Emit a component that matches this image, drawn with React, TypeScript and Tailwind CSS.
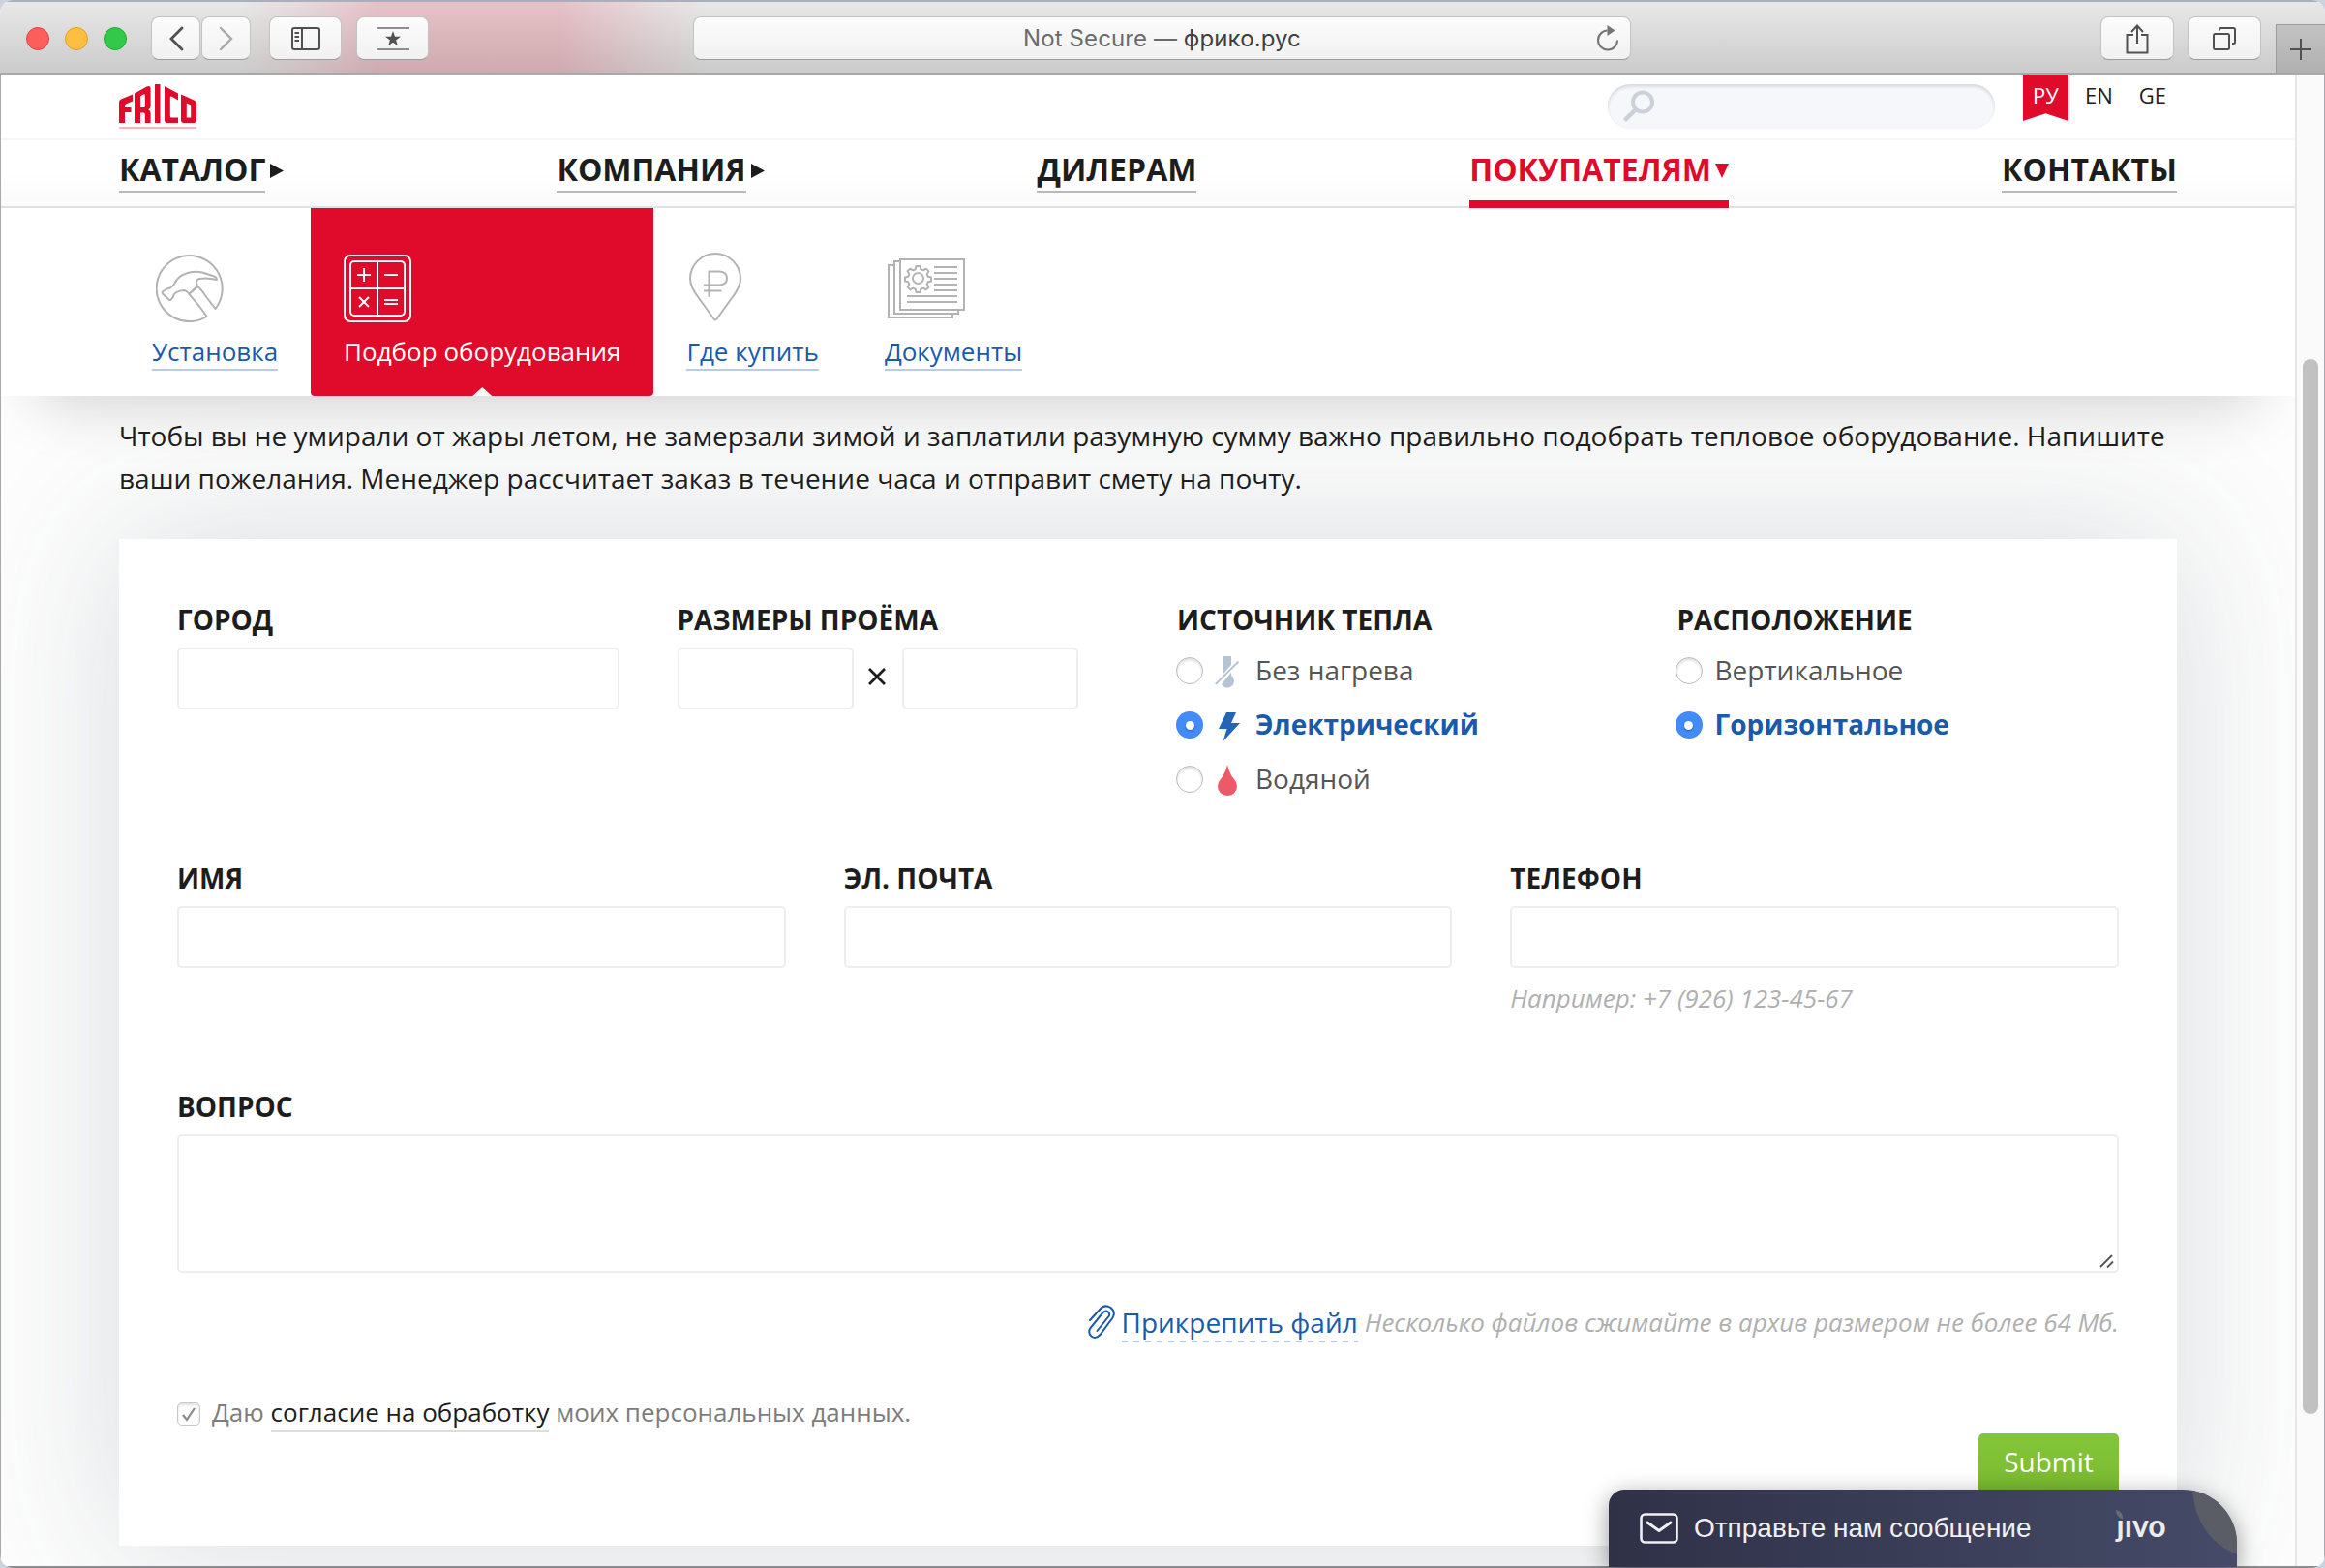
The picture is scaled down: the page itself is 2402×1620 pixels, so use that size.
import type { ReactNode } from "react";

const toolButton =
  "flex h-[45px] items-center justify-center rounded-[8px] border border-[#c3c3c3] border-b-[#9c9c9c] bg-linear-to-b from-[#fcfcfc] to-[#f1f1f1]";

function Toolbar() {
  return (
    <header className="relative flex h-[77px] shrink-0 items-start border-t-2 border-b-2 border-t-[#a9afbd] border-b-[#a9a9a9] bg-linear-to-b from-[#e8e8e8] to-[#cbcbcb] pt-[15px]">
      <div className="absolute inset-0 bg-[linear-gradient(90deg,transparent_250px,rgba(224,10,43,0.06)_310px,rgba(224,10,43,0.17)_390px,rgba(224,10,43,0.17)_580px,rgba(224,10,43,0.06)_670px,transparent_730px)]" />
      <div className="relative flex w-full items-start pl-[27px]">
        <div className="flex h-[45px] items-center gap-4">
          <span className="size-6 rounded-full border border-[#e2463f] bg-[#fc5f5b]" />
          <span className="size-6 rounded-full border border-[#dfa023] bg-[#fdbe41]" />
          <span className="size-6 rounded-full border border-[#1dad2b] bg-[#34c84a]" />
        </div>
        <div className="ml-[25px] flex gap-px">
          <button className={`${toolButton} w-[51px]`}>
            <svg width="16" height="26" viewBox="0 0 16 26" fill="none" stroke="#505050" strokeWidth="2.8" strokeLinecap="round">
              <path d="M14 2 3 13l11 11" />
            </svg>
          </button>
          <button className={`${toolButton} w-[51px]`}>
            <svg width="16" height="26" viewBox="0 0 16 26" fill="none" stroke="#a8a8a8" strokeWidth="2.4" strokeLinecap="round">
              <path d="m2 2 11 11L2 24" />
            </svg>
          </button>
        </div>
        <button className={`${toolButton} ml-[19px] w-[75px]`}>
          <svg width="32" height="26" viewBox="0 0 32 26" fill="none" stroke="#505050" strokeWidth="2">
            <rect x="2" y="2" width="28" height="22" rx="2" />
            <path d="M12 2v22" />
            <path d="M4.500 7h4.500M4.500 11h4.500M4.500 15h4.500" strokeWidth="1.800" />
          </svg>
        </button>
        <button className={`${toolButton} ml-[15px] w-[75px]`}>
          <svg width="34" height="26" viewBox="0 0 34 26">
            <path d="M0 2h34M0 24h34" stroke="#8d8d8d" strokeWidth="2" />
            <path d="m17 5 2 5.800h6l-4.900 3.600 1.800 5.800L17 16.700l-4.900 3.500 1.800-5.800L9 10.800h6z" fill="#505050" />
          </svg>
        </button>
        <div className={`${toolButton} relative ml-[273px] w-[969px]`}>
          <span className="whitespace-pre font-['Inter'] text-[24px] leading-[45px] tracking-[0.1px] text-[#6b6b6b]">
            Not Secure — <span className="text-[#3f3f3f]">фрико.рус</span>
          </span>
          <svg className="absolute right-[11px] top-[7px]" width="24" height="28" viewBox="0 0 24 28" fill="none">
            <path d="M11.500 6.500A10 10 0 1 0 22 16.500" stroke="#747474" strokeWidth="2" />
            <path d="M11.500 1v11l8-5.500z" fill="#747474" />
          </svg>
        </div>
        <button className={`${toolButton} ml-[485px] w-[76px]`}>
          <svg width="26" height="34" viewBox="0 0 26 34" fill="none" stroke="#505050" strokeWidth="2">
            <path d="M9 13H2.500v18.500h21V13H17" />
            <path d="M13 22V4M7 10l6-6.500L19 10" />
          </svg>
        </button>
        <button className={`${toolButton} ml-[14px] w-[76px]`}>
          <svg width="26" height="26" viewBox="0 0 26 26" fill="none" stroke="#505050" strokeWidth="2">
            <rect x="2" y="8" width="16" height="16" rx="1.500" />
            <path d="M8 4.500V3.500A1.500 1.500 0 0 1 9.500 2H22.500A1.500 1.500 0 0 1 24 3.500v13a1.500 1.500 0 0 1-1.500 1.500H21" />
          </svg>
        </button>
        <button className="ml-[15px] mt-[8px] flex h-[50px] flex-1 items-center justify-center border-l border-t border-[#9c9c9c] bg-linear-to-b from-[#c2c2c2] to-[#b0b0b0]">
          <svg width="22" height="22" viewBox="0 0 22 22" stroke="#505050" strokeWidth="2">
            <path d="M11 0v22M0 11h22" />
          </svg>
        </button>
      </div>
    </header>
  );
}

function Logo() {
  return (
    <a className="mt-[10px] flex h-[46px] w-[80px] flex-col justify-between border-b-2 border-[#f7b3be]">
      <svg width="80" height="40" viewBox="0 0 80 40" fill="#e00a2b" fillRule="evenodd">
        <path d="M0 40V18.500Q0 16.500 2 15.500L14 10.500V17.500L7 20.500Q6 21 6 22V24H12.500V29H6V40Z" />
        <path d="M16 40V9.500L28.500 2.600Q32.600 .8 32.600 5V22.500Q32.600 25 30.200 26.200Q32.600 27.400 32.600 30V40H26.800V31Q26.800 29.500 25.500 29.500H22V40ZM22 12.500V24H25.500Q26.800 24 26.800 22.500V11.500Q26.800 9.800 25.200 10.600Z" />
        <path d="M37 0H42.500V40H37Z" />
        <path d="M47 2L61 9.500V16.500L54.500 12.800Q52.800 12 52.800 13.800V33Q52.800 34.500 54.300 34.500H61V40H50Q47 40 47 37Z" />
        <path d="M64 10.500L77.500 16.500Q80 17.500 80 20V37Q80 40 77 40H67Q64 40 64 37ZM69.800 19.500V34.500H74.200V22.500Q74.200 21.400 73.200 21Z" />
      </svg>
    </a>
  );
}

function TopBar() {
  return (
    <div className="flex h-[68px] items-start border-b-2 border-[#f6f6f6] bg-white pl-[122px]">
      <Logo />
      <div className="ml-[1458px] mt-[10px] flex h-[46px] w-[400px] items-center rounded-full bg-[#f5f7fa] pl-4 shadow-[inset_0_3px_3px_rgba(70,85,110,0.15),inset_0_0_2px_rgba(70,85,110,0.08)]">
        <svg width="34" height="34" viewBox="0 0 34 34" fill="none" stroke="#cbd1da">
          <circle cx="20" cy="12.500" r="10" strokeWidth="4" />
          <path d="M13 20 1.500 31.500" strokeWidth="4.500" />
        </svg>
      </div>
      <div className="ml-[29px] flex text-[22px] leading-[42px] text-[#1d1d1d]">
        <span className="h-[48px] w-[47px] bg-[#e00a2b] text-center text-white [clip-path:polygon(0_0,100%_0,100%_100%,50%_84%,0_100%)]">
          РУ
        </span>
        <span className="ml-[17px]">EN</span>
        <span className="ml-[27px]">GE</span>
      </div>
    </div>
  );
}

function NavItem({ label, arrow }: { label: string; arrow?: boolean }) {
  return (
    <a className="flex items-start">
      <span className="h-[54px] border-b-2 border-[#b9b9b9] leading-[60px]">{label}</span>
      {arrow && (
        <svg className="ml-[5px] mt-[24px]" width="14" height="15" viewBox="0 0 14 15" fill="#1d1d1d">
          <path d="M0 0 14 7.500 0 15z" />
        </svg>
      )}
    </a>
  );
}

function MainNav() {
  return (
    <nav className="flex h-[70px] items-start justify-between border-b-2 border-[#dde2e6] bg-linear-to-b from-white via-white to-[#fafafa] pl-[122px] pr-[122px] text-[32px] font-bold text-[#1d1d1d]">
      <NavItem label="КАТАЛОГ" arrow />
      <NavItem label="КОМПАНИЯ" arrow />
      <NavItem label="ДИЛЕРАМ" />
      <a className="flex h-[70px] items-start border-b-8 border-[#e00a2b] text-[#e00a2b]">
        <span className="leading-[60px]">ПОКУПАТЕЛЯМ</span>
        <svg className="ml-[4px] mt-[24px]" width="14" height="15" viewBox="0 0 14 15" fill="#e00a2b">
          <path d="M0 0H14L7 15z" />
        </svg>
      </a>
      <NavItem label="КОНТАКТЫ" />
    </nav>
  );
}

function HammerIcon() {
  return (
    <svg className="ml-[4px]" width="70" height="70" viewBox="0 0 70 70" fill="none" stroke="#b3b3b3" strokeWidth="2" strokeLinejoin="round">
      <path d="M61.500 56A34 34 0 1 0 52.600 64Q48 56.500 34.300 40.800L43.500 33Q46 35 53 45Z" />
      <path d="M7 40.500Q6 39 7.500 38L11.500 35.500Q16 35 19 30.500Q21 25.500 26 22Q37 16 48 18.500Q56 21 61.500 23Q63 24 63 26Q53 23.500 45 25Q40 26.500 43 32.500L34.500 40.500Q31 37 29 37Q20 38 18.500 42Q18 45 15.500 46.800Q14.500 47.500 13.500 46.500Z" fill="#fff" />
    </svg>
  );
}

function CalculatorIcon() {
  return (
    <svg width="70" height="70" viewBox="0 0 70 70" fill="none" stroke="#fff" strokeWidth="2">
      <rect x="1" y="1" width="68" height="68" rx="6" />
      <rect x="7" y="7" width="56" height="56" rx="4" />
      <path d="M35 7v56M7 35h56" />
      <path d="M21 14v14M14 21h14M42 21h14M42 47h14M42 51h14M16 44l10 10M26 44 16 54" />
    </svg>
  );
}

function PinIcon() {
  return (
    <svg className="ml-[3px] mt-[-2px]" width="54" height="71" viewBox="0 0 54 71" fill="none" stroke="#b3b3b3" strokeWidth="2">
      <path d="M27 69.500Q25.800 69.500 24 66.500Q17 56.500 10 47Q1 35.500 1 27A26 26 0 0 1 53 27Q53 35.500 44 47Q37 56.500 30 66.500Q28.200 69.500 27 69.500Z" />
      <path d="M20.500 46V19.500H31.500Q39 20 39 26.500Q39 33 31.500 33.500H15M15 39.500H33.500" />
    </svg>
  );
}

function DocumentsIcon() {
  return (
    <svg className="ml-[3px] mt-[4px]" width="80" height="62" viewBox="0 0 80 62" fill="none" stroke="#b3b3b3" strokeWidth="2">
      <path d="M13 1H79V53H13Z" />
      <path d="M12 3H7V57H73V54M6 7H1V61H67V58" />
      <path d="M48 9H72M48 15H72M48 21H72M48 27H72M48 33H72M20 39H72M20 45H72" />
      <circle cx="31.500" cy="20.500" r="5.500" />
      <path d="M29.500 8h4l.8 3.300 2.500 1 2.900-1.700 2.700 2.700-1.700 2.900 1 2.500 3.300.8v4l-3.300.8-1 2.500 1.700 2.900-2.700 2.700-2.900-1.700-2.500 1-.8 3.300h-4l-.8-3.300-2.500-1-2.900 1.700-2.700-2.700 1.700-2.900-1-2.500-3.300-.8v-4l3.300-.8 1-2.500-1.700-2.900 2.700-2.700 2.900 1.700 2.500-1z" strokeLinejoin="round" />
    </svg>
  );
}

function SubItem({ label, icon }: { label: string; icon: ReactNode }) {
  return (
    <a className="px-[34px] pt-[48px] text-[#1a5aab]">
      <div className="flex h-[82px] items-start">{icon}</div>
      <div className="h-[38px] border-b-2 border-[#b9cce7] leading-[36px]">{label}</div>
    </a>
  );
}

function SubNav() {
  return (
    <div className="relative flex h-[194px] bg-white pl-[122px] text-[26px] shadow-[0_50px_60px_-40px_rgba(0,0,0,0.17)]">
      <SubItem label="Установка" icon={<HammerIcon />} />
      <a className="relative rounded-b-[4px] bg-[#e00a2b] px-[34px] pt-[48px] text-white">
        <div className="flex h-[82px] items-start">
          <CalculatorIcon />
        </div>
        <div className="leading-[36px]">Подбор оборудования</div>
        <span className="absolute bottom-0 left-1/2 h-[9px] w-[20px] -translate-x-1/2 bg-[#f6f6f6] [clip-path:polygon(50%_0,100%_100%,0_100%)]" />
      </a>
      <SubItem label="Где купить" icon={<PinIcon />} />
      <SubItem label="Документы" icon={<DocumentsIcon />} />
    </div>
  );
}

const inputBox = "block h-[64px] w-full rounded-[5px] border-2 border-[#eeeeee] bg-white";

function Field({ label, children }: { label: string; children?: ReactNode }) {
  return (
    <div>
      <div className="mb-[10px] whitespace-nowrap text-[28px] font-bold leading-[38px] text-[#1d1d1d]">{label}</div>
      {children}
    </div>
  );
}

function Radio({ label, checked, icon }: { label: string; checked?: boolean; icon?: ReactNode }) {
  return (
    <label className="flex h-[56px] items-center">
      {checked ? (
        <span className="mt-[2px] flex size-[28px] items-center justify-center rounded-full bg-[#418bfb]">
          <span className="size-[9px] rounded-full bg-white shadow-[0_1px_2px_rgba(0,0,0,0.35)]" />
        </span>
      ) : (
        <span className="mt-[2px] size-[28px] rounded-full border border-[#bcbcbc] bg-white shadow-[inset_0_2px_3px_rgba(0,0,0,0.14)]" />
      )}
      {icon && <span className="ml-[12px] mr-[3px] mt-[6px] h-[34px] w-[26px]">{icon}</span>}
      <span className={checked ? "ml-[13px] text-[28px] font-bold text-[#1a5aab]" : "ml-[13px] text-[28px] text-[#555]"}>
        {label}
      </span>
    </label>
  );
}

function NoHeatIcon() {
  return (
    <svg width="26" height="34" viewBox="0 0 26 34" fill="#b4c4d4">
      <path d="M9 0h8v9L9 18z" />
      <path d="M17 16.500v3q3 2.500 3 6a7 7 0 0 1-13 3.500z" />
      <path d="M24.500 5.500.800 29" stroke="#b4c4d4" strokeWidth="2" />
    </svg>
  );
}

function BoltIcon() {
  return (
    <svg width="26" height="34" viewBox="0 0 26 34" fill="#2264b5">
      <path d="M12 2H22L17 13H26L8.500 32 12.500 19H4z" />
    </svg>
  );
}

function DropIcon() {
  return (
    <svg width="26" height="34" viewBox="0 0 26 34" fill="#ec5a68">
      <path d="M13 0Q14 6 18 12.500Q23 18 23 22.500A10 9.500 0 0 1 3 22.500Q3 18 8 12.500Q12 6 13 0Z" />
    </svg>
  );
}

function PaperclipIcon() {
  return (
    <svg className="mr-[7px] mt-[4px]" width="28" height="36" viewBox="0 0 28 36" fill="none" stroke="#1a5aab" strokeWidth="2" strokeLinecap="round">
      <path d="M2 16 13.500 3.500Q18 -.5 23.500 3Q29 7.500 25.500 13.500L12.500 31Q8 36 3.500 32.500Q-.5 29 2.500 24L15.500 8Q18.500 5.500 21 7.500Q23 9.500 21.500 12L9.500 27" />
    </svg>
  );
}

function RequestForm() {
  return (
    <form className="mt-[41px] h-[1040px] bg-white px-[60px] pt-[64px] shadow-[0_0_150px_rgba(60,72,85,0.19)]">
      <div className="grid h-[211px] grid-cols-4 gap-[60px]">
        <Field label="ГОРОД">
          <input className={inputBox} />
        </Field>
        <Field label="РАЗМЕРЫ ПРОЁМА">
          <div className="flex items-center">
            <div className="w-[182px]">
              <input className={inputBox} />
            </div>
            <svg className="ml-[14px] mr-[16px] mt-[-5px]" width="20" height="20" viewBox="0 0 20 20" stroke="#1d1d1d" strokeWidth="2.800">
              <path d="M2 2l16 16M18 2 2 18" />
            </svg>
            <div className="w-[182px]">
              <input className={inputBox} />
            </div>
          </div>
        </Field>
        <Field label="ИСТОЧНИК ТЕПЛА">
          <div className="-ml-px mt-[-5px]">
            <Radio label="Без нагрева" icon={<NoHeatIcon />} />
            <Radio label="Электрический" checked icon={<BoltIcon />} />
            <Radio label="Водяной" icon={<DropIcon />} />
          </div>
        </Field>
        <Field label="РАСПОЛОЖЕНИЕ">
          <div className="-ml-[2px] mt-[-5px]">
            <Radio label="Вертикальное" />
            <Radio label="Горизонтальное" checked />
          </div>
        </Field>
      </div>

      <div className="mt-[56px] grid grid-cols-3 gap-[60px]">
        <Field label="ИМЯ">
          <input className={inputBox} />
        </Field>
        <Field label="ЭЛ. ПОЧТА">
          <input className={inputBox} />
        </Field>
        <Field label="ТЕЛЕФОН">
          <input className={inputBox} />
          <div className="mt-[13px] text-[26px] italic leading-[36px] text-[#b0b0b0]">Например: +7 (926) 123-45-67</div>
        </Field>
      </div>

      <div className="mt-[75px]">
        <Field label="ВОПРОС">
          <div className="flex h-[143px] items-end justify-end rounded-[5px] border-2 border-[#eeeeee] bg-white p-[2px]">
            <svg width="16" height="16" viewBox="0 0 16 16" stroke="#555" strokeWidth="1.800">
              <path d="M1 14 13 2M8 14.500l6-6" />
            </svg>
          </div>
        </Field>
      </div>

      <div className="mt-[29px] flex justify-end leading-[44px]">
        <PaperclipIcon />
        <span className="h-[43px] bg-[repeating-linear-gradient(90deg,#b9cce7_0_6px,transparent_6px_12px)] bg-[length:100%_2px] bg-bottom bg-no-repeat text-[28px] text-[#1a5aab]">
          Прикрепить файл
        </span>
        <span className="ml-[7px] text-[26px] italic text-[#b0b0b0]">
          Несколько файлов сжимайте в архив размером не более 64 Мб.
        </span>
      </div>

      <div className="mt-[51px] flex h-[40px] whitespace-pre text-[26px] leading-[40px] text-[#7d7d7d]">
        <span className="mr-[12px] mt-[10px] flex size-[24px] items-center justify-center rounded-[5px] border border-[#c8c8c8] bg-white shadow-[inset_0_2px_3px_rgba(0,0,0,0.12)]">
          <svg width="14" height="15" viewBox="0 0 14 15" fill="none" stroke="#8a8a8a" strokeWidth="2.200">
            <path d="m1 8 4 5L13 1" />
          </svg>
        </span>
        Даю <span className="h-[40px] border-b-2 border-[#dddddd] text-[#1d1d1d]">согласие на обработку</span> моих персональных данных.
      </div>

      <div className="mt-[2px] flex justify-end">
        <button type="button" className="h-[66px] w-[145px] rounded-[5px] bg-linear-to-b from-[#84c63a] to-[#79b930] pb-[8px] text-[28px] leading-[58px] text-white">
          Submit
        </button>
      </div>
    </form>
  );
}

function ChatWidget() {
  return (
    <aside className="absolute bottom-px left-[1662px] flex h-[80px] w-[649px] items-center overflow-hidden rounded-tl-[16px] rounded-tr-[56px] bg-linear-to-r from-[#2f3147] to-[#454b68] pl-[32px]">
      <svg width="40" height="32" viewBox="0 0 40 32" fill="none" stroke="#f0f0f2">
        <rect x="1.500" y="1.500" width="37" height="29" rx="4" strokeWidth="2.600" />
        <path d="m8 10 12 8.500L32 10" strokeWidth="3" strokeLinecap="round" strokeLinejoin="round" />
      </svg>
      <span className="ml-[16px] font-['Liberation_Sans'] text-[28px] text-[#f0f0f2]">Отправьте нам сообщение</span>
      <div className="relative ml-[88px] mt-[-7px] font-['Lato'] text-[32px] font-bold leading-[40px] text-[#ececee]">
        ȷıvo
        <svg className="absolute left-[-1px] top-[4px]" width="8" height="10" viewBox="0 0 8 10" fill="#6b6d72">
          <path d="M0 0Q8 2 7 9.500Q0 7 0 0Z" />
        </svg>
      </div>
      <svg className="absolute right-0 top-0" width="46" height="67" viewBox="0 0 46 67" fill="#5b5d66">
        <path d="M0 0H46V67Q4 50 0 0Z" />
      </svg>
    </aside>
  );
}

export default function App() {
  return (
    <div className="h-[1620px] w-[2402px] overflow-hidden bg-[#ccd3e0] font-['Open_Sans',sans-serif]">
      <div className="relative flex h-[1620px] flex-col overflow-hidden rounded-[14px] bg-[#fcfcfc]">
        <Toolbar />
        <div className="flex min-h-0 flex-1 overflow-hidden border-x border-b-2 border-x-[#a9a9ad] border-b-[#8b8b90]">
          <main className="relative w-[2370px] overflow-hidden bg-[#fdfdfd]">
            <div className="relative z-10">
              <TopBar />
              <MainNav />
              <SubNav />
            </div>
            <div className="mx-[122px] mt-[19px]">
              <p className="relative z-20 whitespace-nowrap text-[28px] leading-[44px] text-[#1d1d1d]">
                Чтобы вы не умирали от жары летом, не замерзали зимой и заплатили разумную сумму важно правильно подобрать тепловое оборудование. Напишите
                <br />
                ваши пожелания. Менеджер рассчитает заказ в течение часа и отправит смету на почту.
              </p>
              <RequestForm />
            </div>
          </main>
          <div className="flex flex-1 justify-center border-l-2 border-[#e6e6e6] bg-[#fafafa]">
            <div className="mt-[294px] h-[1090px] w-[16px] rounded-full bg-[#c1c1c1]" />
          </div>
        </div>
        <div className="absolute bottom-px left-[1662px] h-[80px] w-[649px] rounded-tl-[16px] rounded-tr-[56px] shadow-[0_6px_24px_rgba(0,0,0,0.4)]" />
        <ChatWidget />
      </div>
    </div>
  );
}
